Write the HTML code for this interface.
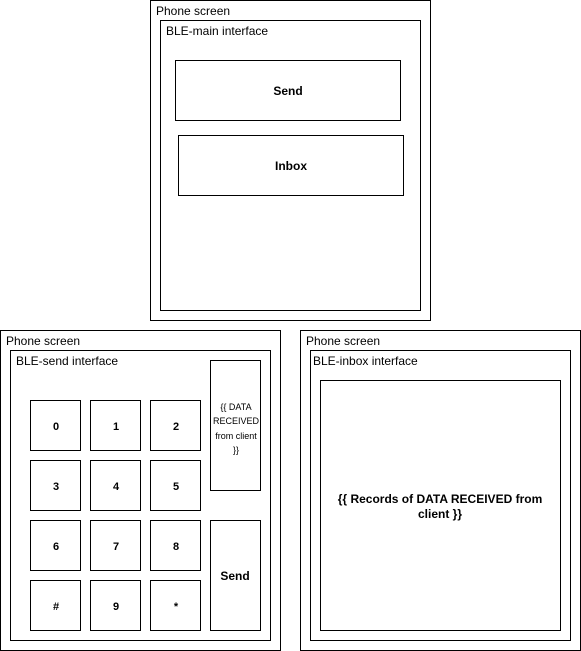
<!DOCTYPE html>
<html><head><style>html,body{margin:0;padding:0;background:#fff}svg{display:block}text{font-family:"Liberation Sans",Arial,sans-serif;fill:#000}</style></head><body>
<svg width="581" height="651" viewBox="0 0 581 651" xmlns="http://www.w3.org/2000/svg">
<g fill="none" stroke="#000" stroke-width="1">
<rect x="150.5" y="0.5" width="280" height="320"/>
<rect x="160.5" y="20.5" width="260" height="290"/>
<rect x="175.5" y="60.5" width="225" height="60"/>
<rect x="178.5" y="135.5" width="225" height="60"/>
<rect x="0.5" y="330.5" width="280" height="320"/>
<rect x="10.5" y="350.5" width="260" height="290"/>
<rect x="30.5" y="400.5" width="50" height="50"/><rect x="90.5" y="400.5" width="50" height="50"/><rect x="150.5" y="400.5" width="50" height="50"/>
<rect x="30.5" y="460.5" width="50" height="50"/><rect x="90.5" y="460.5" width="50" height="50"/><rect x="150.5" y="460.5" width="50" height="50"/>
<rect x="30.5" y="520.5" width="50" height="50"/><rect x="90.5" y="520.5" width="50" height="50"/><rect x="150.5" y="520.5" width="50" height="50"/>
<rect x="30.5" y="580.5" width="50" height="50"/><rect x="90.5" y="580.5" width="50" height="50"/><rect x="150.5" y="580.5" width="50" height="50"/>
<rect x="210.5" y="360.5" width="50" height="130"/>
<rect x="210.5" y="520.5" width="50" height="110"/>
<rect x="300.5" y="330.5" width="280" height="320"/>
<rect x="310.5" y="350.5" width="260" height="290"/>
<rect x="320.5" y="380.5" width="240" height="250"/>
</g>
<g font-size="12">
<text x="156" y="15">Phone screen</text>
<text x="166" y="35">BLE-main interface</text>
<text x="6" y="345">Phone screen</text>
<text x="16" y="365">BLE-send interface</text>
<text x="306" y="345">Phone screen</text>
<text x="313" y="365">BLE-inbox interface</text>
</g>
<g font-size="12" font-weight="bold" text-anchor="middle">
<text x="288" y="95">Send</text>
<text x="291" y="170">Inbox</text>
<text x="235" y="580">Send</text>
<text x="440" y="503">{{ Records of DATA RECEIVED from</text>
<text x="440" y="518">client }}</text>
</g>
<g font-size="11" font-weight="bold" text-anchor="middle">
<text x="56" y="430">0</text><text x="116" y="430">1</text><text x="176" y="430">2</text>
<text x="56" y="490">3</text><text x="116" y="490">4</text><text x="176" y="490">5</text>
<text x="56" y="550">6</text><text x="116" y="550">7</text><text x="176" y="550">8</text>
<text x="56" y="610">#</text><text x="116" y="610">9</text><text x="176" y="610">*</text>
</g>
<g font-size="9" text-anchor="middle">
<text x="236" y="410">{{ DATA</text>
<text x="236" y="424">RECEIVED</text>
<text x="236" y="439">from client</text>
<text x="236" y="453">}}</text>
</g>
</svg>
</body></html>
